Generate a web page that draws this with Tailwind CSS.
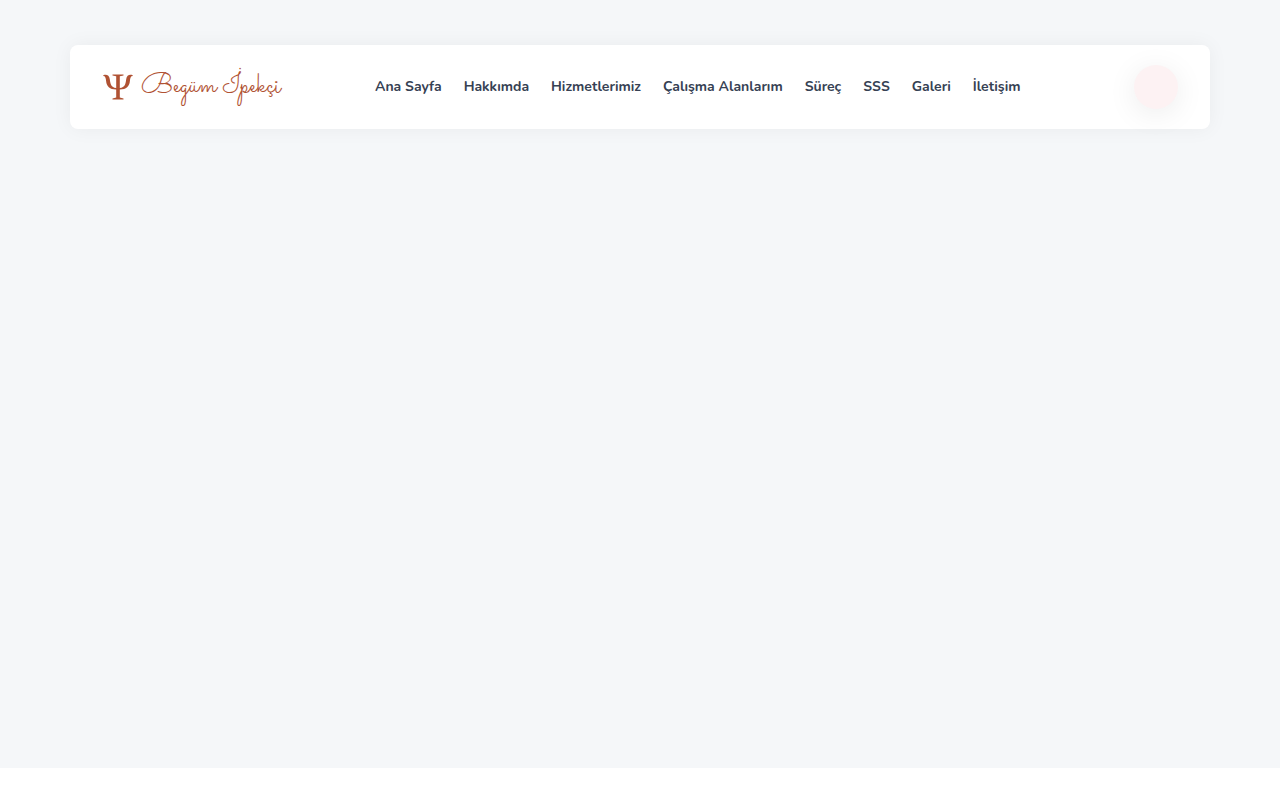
<!DOCTYPE html>
<html lang="tr">
  <head>
    <meta charset="UTF-8" />
    <meta name="viewport" content="width=device-width, initial-scale=1.0" />
    <script src="https://cdn.jsdelivr.net/npm/@tailwindcss/browser@4"></script>
    <title>Begüm İpekçi</title>
  </head>
  <body class="bg-white">
    <div class="min-h-[96vh] bg-[#f5f7f9] px-4 pt-[45px]">

      <header class="mx-auto flex min-h-[84px] max-w-[1140px] items-center rounded-lg bg-white px-8 shadow-[0_0_20px_rgba(0,0,0,0.05)]">
        <!-- logo -->
        <a href="#" class="flex w-[273px] shrink-0 items-center gap-2 pl-px leading-none whitespace-nowrap text-[#b05233]">
          <svg class="h-[26px] w-[30px]" viewBox="0 0 30 26" fill="currentColor" aria-hidden="true">
            <path d="M.3 1.2C3.5 0 6.3 1.3 6.8 5.2C7.4 10 8 13.4 13.2 14V2.2L9.5 1.4V.4H20.5V1.4L16.8 2.2V14C22 13.4 22.6 10 23.2 5.2C23.7 1.3 26.5 0 29.7 1.2V2C27.6 2 27.2 4 26.9 7C26.4 12.4 23.4 15.3 16.8 15.6V23.6L20.5 24.5V25.5H9.5V24.5L13.2 23.6V15.6C6.6 15.3 3.6 12.4 3.1 7C2.8 4 2.4 2 .3 2Z" />
          </svg>
          <span class="font-['Sacramento','Liberation_Serif',cursive] text-[28px]">Begüm İpekçi</span>
        </a>

        <!-- menu -->
        <nav class="flex flex-1 gap-[22px] font-['Nunito','Lato',sans-serif] text-sm font-bold whitespace-nowrap text-[#364153]">
          <a href="#">Ana Sayfa</a>
          <a href="#">Hakkımda</a>
          <a href="#">Hizmetlerimiz</a>
          <a href="#">Çalışma Alanlarım</a>
          <a href="#">Süreç</a>
          <a href="#">SSS</a>
          <a href="#">Galeri</a>
          <a href="#">İletişim</a>
        </nav>

        <button type="button" aria-label="Menü" class="size-11 shrink-0 rounded-full bg-[#fdf2f3] shadow-[0_5px_30px_rgba(0,0,0,0.08)]"></button>
      </header>

    </div>
  </body>
</html>
